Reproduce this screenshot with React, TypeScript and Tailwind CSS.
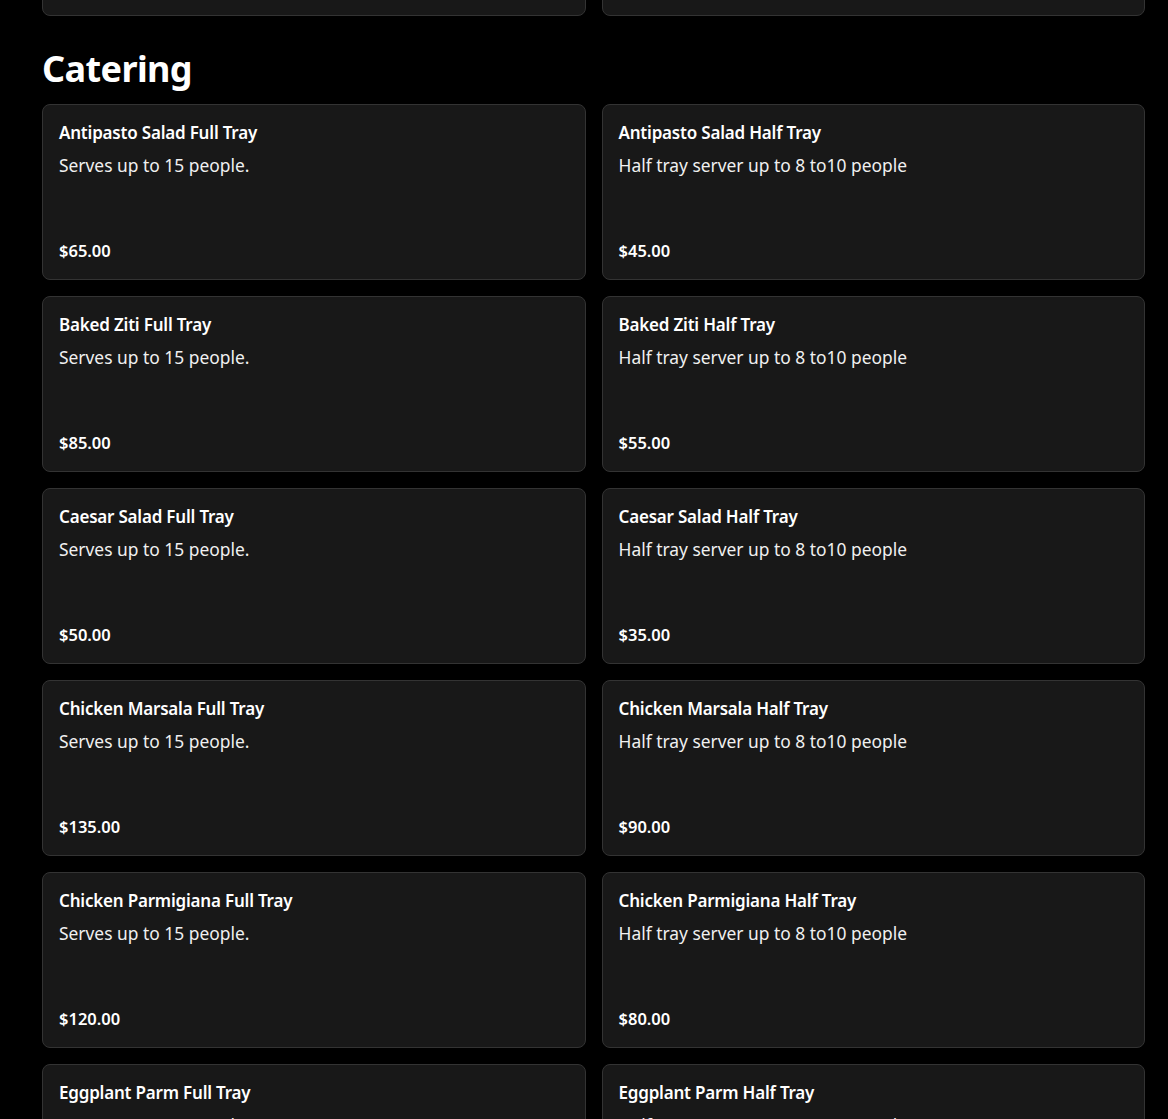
const items = [
  { name: "Antipasto Salad", full: "$65.00", half: "$45.00" },
  { name: "Baked Ziti", full: "$85.00", half: "$55.00" },
  { name: "Caesar Salad", full: "$50.00", half: "$35.00" },
  { name: "Chicken Marsala", full: "$135.00", half: "$90.00" },
  { name: "Chicken Parmigiana", full: "$120.00", half: "$80.00" },
  { name: "Eggplant Parm", full: "$110.00", half: "$70.00" },
];

function Card({ title, desc, price }: { title: string; desc: string; price: string }) {
  return (
    <div className="h-[176px] rounded-lg border border-[#333333] bg-[#181818] px-4 pt-4 pb-4 flex flex-col">
      <div className="text-[17px] leading-6 font-semibold text-white tracking-[-0.2px]">{title}</div>
      <div className="mt-2 text-[17.4px] leading-6 text-[#f0f0f0]">{desc}</div>
      <div className="mt-auto text-[16.5px] leading-6 font-semibold text-white">{price}</div>
    </div>
  );
}

export default function App() {
  return (
    <div className="min-h-screen bg-black text-white pl-[42px] pr-[23px] overflow-hidden" style={{ fontFamily: '"Noto Sans", "Lato", sans-serif' }}>
      {/* previous section, mostly scrolled off */}
      <div className="grid grid-cols-2 gap-4 -mt-[160px]">
        <Card title="" desc="" price="" />
        <Card title="" desc="" price="" />
      </div>

      <h2 className="mt-[33px] text-[36px] leading-10 font-bold tracking-[-0.6px]">Catering</h2>

      <div className="mt-[15px] grid grid-cols-2 gap-4">
        {items.map((it) => (
          <>
            <Card key={it.name + "f"} title={`${it.name} Full Tray`} desc="Serves up to 15 people." price={it.full} />
            <Card key={it.name + "h"} title={`${it.name} Half Tray`} desc="Half tray server up to 8 to10 people" price={it.half} />
          </>
        ))}
      </div>
    </div>
  );
}
